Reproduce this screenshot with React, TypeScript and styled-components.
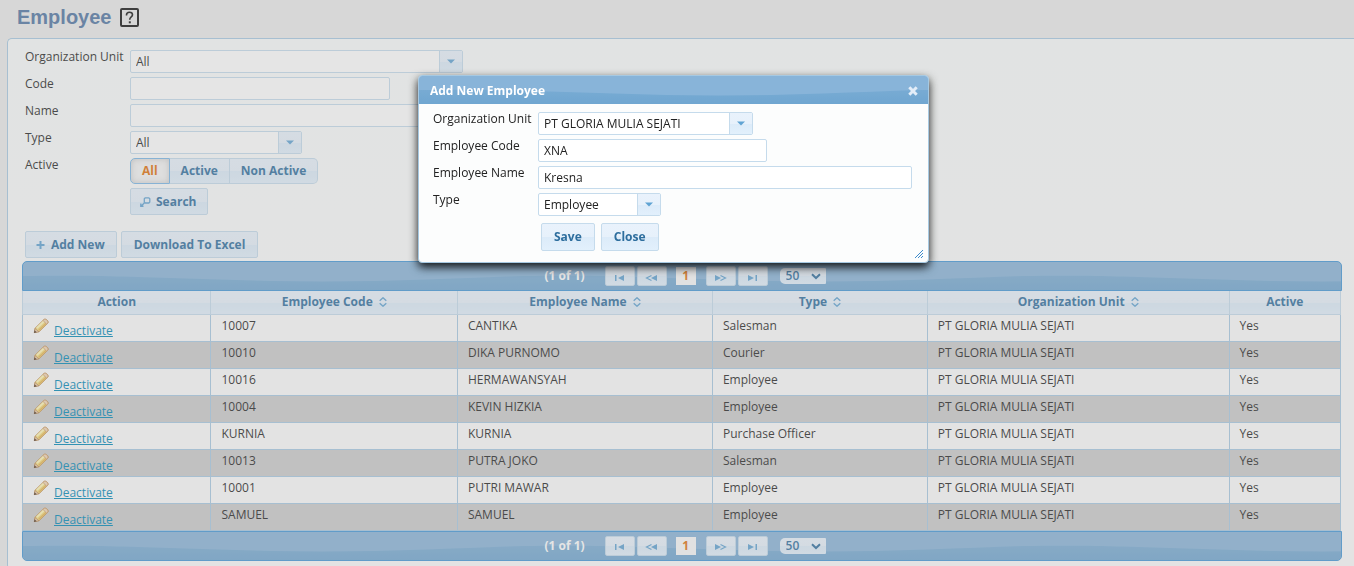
import React, { useId } from 'react';
import styled, { createGlobalStyle, css } from 'styled-components';

const colors = {
  border: '#a6c9e2',
  controlBorder: '#c5dbec',
  header: '#88b4d9',
  headerLow: '#6ea5d0',
  headerBorder: '#4297d7',
  accent: '#2e6e9e',
  icon: '#5fa3d3',
  active: '#e17009',
  text: '#222222',
};

const GlobalStyle = createGlobalStyle`
  *, *::before, *::after { box-sizing: border-box; }
  body {
    margin: 0;
    overflow: hidden;
    background: #ebebeb;
    color: ${colors.text};
    font: 12px/16px "Open Sans", "Lucida Grande", "Lucida Sans", sans-serif;
  }
  button, input, select { font: inherit; color: inherit; margin: 0; }
`;

const controlFill = css`
  background: linear-gradient(#e9f2fc 0, #e7f1fb 50%, #dcebf9 51%, #e2f0fc 100%);
`;

/* ---------- page frame ---------- */

const Page = styled.main`
  min-height: 100vh;
`;

const PageHeader = styled.header`
  display: flex;
  align-items: center;
  gap: 8px;
  height: 38px;
  padding: 0 17px 4px;
`;

const PageTitle = styled.h1`
  margin: 0;
  color: #4f74a2;
  font: bold 20px/24px "Liberation Sans", Arial, sans-serif;
`;

const Panel = styled.section`
  margin-left: 7px;
  padding: 11px 12px 8px 14px;
  border: 1px solid ${colors.border};
  border-right: 0;
  border-radius: 5px 0 0 5px;
  background: linear-gradient(#fafdfc, #fdfdfd);
`;

/* ---------- form parts ---------- */

const FieldGrid = styled.div`
  display: grid;
  grid-template-columns: 105px minmax(0, 1fr);
  row-gap: 4px;
`;

const FilterGrid = styled(FieldGrid)`
  margin-left: 3px;
`;

const FieldLabel = styled.label`
  height: 16px;
  margin-top: -1px;
  line-height: 16px;
  white-space: nowrap;
`;

const TextInput = styled.input<{ $width: number }>`
  width: ${(p) => p.$width}px;
  max-width: 100%;
  height: 23px;
  padding: 0 5px 1px;
  border: 1px solid ${colors.controlBorder};
  border-radius: 2px;
  background: #fff;
  outline: none;
`;

const SelectFrame = styled.span<{ $width: number }>`
  position: relative;
  display: flex;
  width: ${(p) => p.$width}px;
  height: 23px;
  border: 1px solid ${colors.controlBorder};
  border-radius: 2px;
  background: #fff;
  overflow: hidden;
`;

const SelectControl = styled.select`
  appearance: none;
  flex: 1;
  min-width: 0;
  padding: 1px 26px 0 5px;
  border: 0;
  background: transparent;
  outline: none;
`;

const SelectTrigger = styled.span`
  position: absolute;
  inset: 0 0 0 auto;
  display: grid;
  place-items: center;
  width: 23px;
  border-left: 1px solid ${colors.controlBorder};
  pointer-events: none;
  ${controlFill}
`;

const Button = styled.button`
  display: inline-flex;
  align-items: center;
  justify-content: center;
  gap: 5px;
  height: 27px;
  padding: 0 12px;
  border: 1px solid ${colors.controlBorder};
  border-radius: 2px;
  color: ${colors.accent};
  font-weight: bold;
  white-space: nowrap;
  ${controlFill}
`;

const IconButton = styled(Button)`
  padding: 0 11px 0 9px;
`;

const DialogButton = styled(Button)`
  height: 28px;
`;

const Segmented = styled.div`
  display: flex;
  height: 26px;
`;

const Segment = styled.label`
  position: relative;
  display: grid;
  place-items: center;
  padding: 0 11px;
  border: 1px solid ${colors.controlBorder};
  border-left-width: 0;
  color: ${colors.accent};
  font-weight: bold;
  ${controlFill}

  &:first-child { border-left-width: 1px; border-radius: 5px 0 0 5px; }
  &:last-child { border-radius: 0 5px 5px 0; }
  &:has(input:checked) {
    border: 1px solid #79b7e7;
    background: #f5f5f5;
    box-shadow: inset 0 0 6px #c8c8c8;
    color: ${colors.active};
  }
  input { position: absolute; inset: 0; margin: 0; opacity: 0; }
`;

const Toolbar = styled.div`
  display: flex;
  gap: 4px;
  margin: 16px 0 3px 3px;
`;

/* ---------- data table ---------- */

const Paginator = styled.nav<{ $end?: boolean }>`
  position: relative;
  display: flex;
  align-items: center;
  justify-content: center;
  height: 30px;
  padding-left: 6px;
  border: 1px solid ${colors.headerBorder};
  border-radius: ${(p) => (p.$end ? '0 0 5px 5px' : '5px 5px 0 0')};
  background: ${colors.header};
  overflow: hidden;
  > * { position: relative; }
`;

const WaveSvg = styled.svg`
  && { position: absolute; }
  inset: 0;
  width: 100%;
  height: 100%;
`;

const PageCount = styled.span`
  margin-right: 20px;
  color: #fff;
  font-weight: bold;
`;

const PageButton = styled.button`
  display: grid;
  place-items: center;
  width: 30px;
  height: 20px;
  margin-right: 2px;
  padding: 2px 0 0;
  border: 1px solid ${colors.controlBorder};
  border-radius: 2px;
  ${controlFill}
`;

const CurrentPage = styled.button`
  width: 20px;
  height: 18px;
  margin: 0 10px 0 7px;
  padding: 0;
  border: 0;
  background: #f9f9f9;
  color: ${colors.active};
  font-weight: bold;
  line-height: 18px;
`;

const PageSize = styled.span`
  display: flex;
  align-items: center;
  width: 46px;
  height: 16px;
  margin-left: 10px;
  border-radius: 5px 1px 1px 5px;
  ${controlFill}
  select {
    appearance: none;
    width: 100%;
    height: 16px;
    padding: 0 0 0 6px;
    border: 0;
    background: transparent;
    color: ${colors.accent};
    line-height: 16px;
    font-weight: 600;
    outline: none;
  }
  svg { position: absolute; right: 5px; top: 5px; pointer-events: none; }
`;

const DataTable = styled.table`
  width: calc(100% - 1px);
  border-collapse: collapse;
  table-layout: fixed;
`;

const HeadCell = styled.th<{ $share: number }>`
  width: ${(p) => p.$share}%;
  height: 23px;
  padding: 0;
  border: 1px solid ${colors.controlBorder};
  border-top: 0;
  color: ${colors.accent};
  line-height: 20px;
  ${controlFill}
  svg { margin-left: 6px; vertical-align: -1px; }
`;

const Row = styled.tr`
  background: #fdfdfd;
  &:nth-child(even) { background: #cccccc; }
`;

const Cell = styled.td`
  height: 27px;
  padding: 3px 10px 7px;
  border: 1px solid ${colors.border};
  line-height: 16px;
  white-space: nowrap;
`;

const ActionCell = styled(Cell)`
  padding: 3px 10px 2px;
`;

const Actions = styled.div`
  display: flex;
  align-items: flex-start;
  gap: 5px;
  height: 21px;
`;

const EditButton = styled.button`
  width: 16px;
  height: 16px;
  padding: 0;
  border: 0;
  background: none;
  line-height: 0;
`;

const DeactivateLink = styled.a`
  margin-top: 5px;
  color: #0088b8;
`;

/* ---------- dialog ---------- */

const Overlay = styled.div`
  position: fixed;
  inset: 0;
  display: flex;
  align-items: flex-start;
  justify-content: center;
  padding: 75px 7px 0 0;
  background: rgba(170, 170, 170, 0.3);
`;

const Dialog = styled.section`
  position: relative;
  width: 511px;
  max-width: 100%;
  border: 1px solid ${colors.border};
  border-radius: 4px;
  background: #fcfdfd;
  box-shadow: 0 4px 10px rgba(0, 0, 0, 0.9);
  overflow: hidden;
`;

const DialogTitleBar = styled.header`
  position: relative;
  display: flex;
  align-items: center;
  justify-content: space-between;
  height: 28px;
  padding: 1px 9px 0 11px;
  background: ${colors.header};
  color: #fff;
  > * { position: relative; }
`;

const DialogTitle = styled.h2`
  margin: 0;
  font-size: 12px;
  line-height: 16px;
`;

const CloseButton = styled.button`
  display: grid;
  place-items: center;
  width: 12px;
  height: 16px;
  padding: 0;
  border: 0;
  background: none;
`;

const DialogBody = styled.form`
  padding: 8px 14px 11px;
`;

const DialogActions = styled.div`
  display: flex;
  gap: 6px;
  margin: 7px 0 0 108px;
`;

const Grip = styled.svg`
  position: absolute;
  right: 5px;
  bottom: 4px;
`;

/* ---------- drawings ---------- */

function GlossWave() {
  const id = useId();
  return (
    <WaveSvg aria-hidden="true">
      <defs>
        <linearGradient id={`${id}g`} x1="0" y1="0" x2="0" y2="1">
          <stop offset="0" stopColor="#78abd3" />
          <stop offset="1" stopColor={colors.headerLow} />
        </linearGradient>
        <pattern id={`${id}p`} width="500" height="30" patternUnits="userSpaceOnUse">
          <path
            d="M0 14C30 13.500 70 13.500 100 14.500C160 16 230 19.500 300 19.500C370 19.500 440 16 500 14V30H0Z"
            fill={`url(#${id}g)`}
          />
        </pattern>
      </defs>
      <rect width="100%" height="100%" fill={`url(#${id}p)`} />
    </WaveSvg>
  );
}

const HelpIcon = () => (
  <svg width="21" height="21" viewBox="0 0 21 21" fill="none" aria-label="Help">
    <rect x="2" y="2" width="17" height="17" rx="1" stroke="#111" strokeWidth="2" />
    <path d="M7.500 8.500V8c0-1.800 1.200-2.800 3-2.800s3 1 3 2.600c0 2.200-2.800 2.200-2.800 5" stroke="#111" strokeWidth="1.600" />
    <rect x="9.800" y="14.300" width="2" height="2" fill="#111" />
  </svg>
);

const Triangle = () => (
  <svg width="8" height="5" viewBox="0 0 8 5" aria-hidden="true">
    <path d="M0 .5h8L4 4.500z" fill={colors.icon} />
  </svg>
);

const SearchIcon = () => (
  <svg width="11" height="10" viewBox="0 0 11 10" fill="none" stroke={colors.icon} aria-hidden="true">
    <path d="M4.300 1.800 5.200.8H8.800L9.800 1.800V5L8.800 6H5.200L4.300 5Z" strokeWidth="1.300" />
    <path d="M4.500 5.800 1.500 8.800M.8 6.500V9.300H3.500" strokeWidth="1.400" />
  </svg>
);

const PlusIcon = () => (
  <svg width="11" height="9" viewBox="0 0 11 9" aria-hidden="true">
    <path d="M4.500 1h2v3h3v2h-3v3h-2V6h-3V4h3z" fill={colors.icon} />
  </svg>
);

const SortIcon = () => (
  <svg width="8" height="10" viewBox="0 0 8 10" fill="none" stroke={colors.icon} strokeWidth="1.400" aria-hidden="true">
    <path d="M.7 3.800 4 .8l3.300 3M.7 6.200 4 9.200l3.300-3" />
  </svg>
);

const PencilIcon = () => (
  <svg width="16" height="16" viewBox="0 0 16 16" aria-hidden="true">
    <path d="M1.300 14.600 2 10.200 10.800 1.600C12.600.2 16 2.800 15 5L6.200 13.700Z" fill="#f7dc7a" stroke="#c08a4c" strokeWidth=".8" />
    <path d="M3.800 10.200 11.300 3" stroke="#fff6b8" strokeWidth="1.800" />
    <path d="M5.800 12.300 13.600 4.800" stroke="#e6b552" strokeWidth="1.400" />
    <path d="M10 2.400 11.200 1.300c1.800-.8 4.200 1.500 3.700 3.700L13.600 6.200Z" fill="#f3d5b3" stroke="#c49463" strokeWidth=".7" />
    <path d="M1.300 14.600 2 10.500 6 13.700Z" fill="#f1d0aa" stroke="#b07a45" strokeWidth=".6" />
    <path d="M1 15 1.500 12.200 3.700 14.200Z" fill="#4a3425" />
  </svg>
);

type PageTarget = 'first' | 'prev' | 'next' | 'last';

const PageIcon = ({ name }: { name: PageTarget }) => {
  const double = name === 'prev' || name === 'next';
  return (
    <svg width={double ? 13 : 11} height="9" viewBox={`0 0 ${double ? 13 : 11} 9`} aria-hidden="true">
      {name === 'first' && <path d="M1 2h1.500v6H1zM10 2v6L4 5z" fill={colors.icon} />}
      {name === 'last' && <path d="M8.500 2H10v6H8.500zM1 2v6l6-3z" fill={colors.icon} />}
      {double && (
        <g transform={name === 'prev' ? 'matrix(-1 0 0 1 13 0)' : undefined}>
          <path d="M1 2v6l6-3z" fill={colors.icon} />
          <path d="M6.500 2.500 11.500 5 6.500 7.500" fill="none" stroke={colors.icon} strokeWidth="1.200" />
        </g>
      )}
    </svg>
  );
};

const Chevron = () => (
  <svg width="10" height="7" viewBox="0 0 10 7" fill="none" stroke={colors.accent} strokeWidth="2" aria-hidden="true">
    <path d="M1 1.200 5 5l4-3.800" />
  </svg>
);

const CloseIcon = () => (
  <svg width="10" height="10" viewBox="0 0 10 10" stroke="#e3edf8" strokeWidth="3" aria-hidden="true">
    <path d="M1.300 1.300l7.400 7.400M8.700 1.300 1.300 8.700" />
  </svg>
);

/* ---------- composed controls ---------- */

interface SelectProps {
  id: string;
  width: number;
  options: string[];
}

function Select({ id, width, options }: SelectProps) {
  return (
    <SelectFrame $width={width}>
      <SelectControl id={id}>
        {options.map((option) => (
          <option key={option}>{option}</option>
        ))}
      </SelectControl>
      <SelectTrigger>
        <Triangle />
      </SelectTrigger>
    </SelectFrame>
  );
}

function Pager({ end }: { end?: boolean }) {
  return (
    <Paginator $end={end} aria-label={end ? 'Bottom pages' : 'Top pages'}>
      <GlossWave />
      <PageCount>(1 of 1)</PageCount>
      <PageButton aria-label="First page"><PageIcon name="first" /></PageButton>
      <PageButton aria-label="Previous page"><PageIcon name="prev" /></PageButton>
      <CurrentPage aria-current="page">1</CurrentPage>
      <PageButton aria-label="Next page"><PageIcon name="next" /></PageButton>
      <PageButton aria-label="Last page"><PageIcon name="last" /></PageButton>
      <PageSize>
        <select aria-label="Rows per page">
          <option>50</option>
        </select>
        <Chevron />
      </PageSize>
    </Paginator>
  );
}

const columns = [
  { title: 'Action', share: 14.3, sortable: false },
  { title: 'Employee Code', share: 18.7, sortable: true },
  { title: 'Employee Name', share: 19.35, sortable: true },
  { title: 'Type', share: 16.3, sortable: true },
  { title: 'Organization Unit', share: 22.9, sortable: true },
  { title: 'Active', share: 8.45, sortable: false },
];

const company = 'PT GLORIA MULIA SEJATI';

const employees = [
  ['10007', 'CANTIKA', 'Salesman'],
  ['10010', 'DIKA PURNOMO', 'Courier'],
  ['10016', 'HERMAWANSYAH', 'Employee'],
  ['10004', 'KEVIN HIZKIA', 'Employee'],
  ['KURNIA', 'KURNIA', 'Purchase Officer'],
  ['10013', 'PUTRA JOKO', 'Salesman'],
  ['10001', 'PUTRI MAWAR', 'Employee'],
  ['SAMUEL', 'SAMUEL', 'Employee'],
];

function Filters() {
  return (
    <FilterGrid>
      <FieldLabel htmlFor="filter-unit">Organization Unit</FieldLabel>
      <Select id="filter-unit" width={333} options={['All', company]} />
      <FieldLabel htmlFor="filter-code">Code</FieldLabel>
      <TextInput id="filter-code" $width={260} />
      <FieldLabel htmlFor="filter-name">Name</FieldLabel>
      <TextInput id="filter-name" $width={374} />
      <FieldLabel htmlFor="filter-type">Type</FieldLabel>
      <Select id="filter-type" width={172} options={['All', 'Employee', 'Salesman', 'Courier']} />
      <FieldLabel as="span">Active</FieldLabel>
      <Segmented role="radiogroup" aria-label="Active">
        {['All', 'Active', 'Non Active'].map((name, i) => (
          <Segment key={name}>
            <input type="radio" name="active" defaultChecked={i === 0} />
            {name}
          </Segment>
        ))}
      </Segmented>
      <span />
      <div>
        <IconButton type="button"><SearchIcon />Search</IconButton>
      </div>
    </FilterGrid>
  );
}

function EmployeeTable() {
  return (
    <>
      <Pager />
      <DataTable>
        <thead>
          <tr>
            {columns.map((c) => (
              <HeadCell key={c.title} $share={c.share} scope="col">
                {c.title}
                {c.sortable && <SortIcon />}
              </HeadCell>
            ))}
          </tr>
        </thead>
        <tbody>
          {employees.map(([code, name, type]) => (
            <Row key={code}>
              <ActionCell>
                <Actions>
                  <EditButton aria-label={`Edit ${name}`}><PencilIcon /></EditButton>
                  <DeactivateLink href="#">Deactivate</DeactivateLink>
                </Actions>
              </ActionCell>
              <Cell>{code}</Cell>
              <Cell>{name}</Cell>
              <Cell>{type}</Cell>
              <Cell>{company}</Cell>
              <Cell>Yes</Cell>
            </Row>
          ))}
        </tbody>
      </DataTable>
      <Pager end />
    </>
  );
}

function AddEmployeeDialog() {
  return (
    <Overlay>
      <Dialog role="dialog" aria-labelledby="dialog-title">
        <DialogTitleBar>
          <GlossWave />
          <DialogTitle id="dialog-title">Add New Employee</DialogTitle>
          <CloseButton type="button" aria-label="Close dialog"><CloseIcon /></CloseButton>
        </DialogTitleBar>
        <DialogBody onSubmit={(e) => e.preventDefault()}>
          <FieldGrid>
            <FieldLabel htmlFor="unit">Organization Unit</FieldLabel>
            <Select id="unit" width={215} options={[company]} />
            <FieldLabel htmlFor="code">Employee Code</FieldLabel>
            <TextInput id="code" $width={229} defaultValue="XNA" />
            <FieldLabel htmlFor="name">Employee Name</FieldLabel>
            <TextInput id="name" $width={374} defaultValue="Kresna" />
            <FieldLabel htmlFor="type">Type</FieldLabel>
            <Select id="type" width={123} options={['Employee', 'Salesman', 'Courier']} />
          </FieldGrid>
          <DialogActions>
            <DialogButton type="submit">Save</DialogButton>
            <DialogButton type="button">Close</DialogButton>
          </DialogActions>
        </DialogBody>
        <Grip width="8" height="8" viewBox="0 0 8 8" stroke="#3d8bcb" strokeWidth="1" aria-hidden="true">
          <path d="M0 8 8 0M3 8l5-5M6 8l2-2" />
        </Grip>
      </Dialog>
    </Overlay>
  );
}

export default function App() {
  return (
    <>
      <GlobalStyle />
      <Page>
        <PageHeader>
          <PageTitle>Employee</PageTitle>
          <HelpIcon />
        </PageHeader>
        <Panel>
          <Filters />
          <Toolbar>
            <IconButton type="button"><PlusIcon />Add New</IconButton>
            <Button type="button">Download To Excel</Button>
          </Toolbar>
          <EmployeeTable />
        </Panel>
      </Page>
      <AddEmployeeDialog />
    </>
  );
}
